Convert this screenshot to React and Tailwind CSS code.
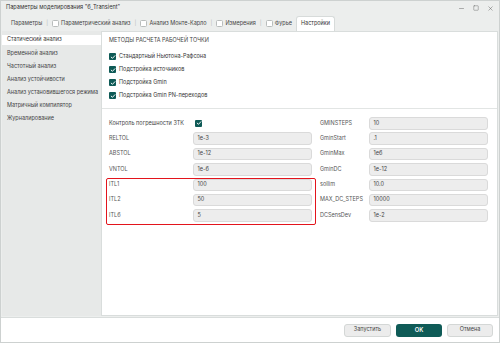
import { Minus, Square, X } from 'lucide-react'

const Check = ({ className = '' }) => (
  <div className={`w-[7px] h-[7px] rounded-[1px] bg-[#0e5a56] flex items-center justify-center shrink-0 ${className}`}>
    <svg viewBox="0 0 10 10" className="w-[6px] h-[6px]">
      <path d="M2 5.2 L4.1 7.2 L8.2 2.8" fill="none" stroke="white" strokeWidth="1.6" strokeLinecap="round" strokeLinejoin="round" />
    </svg>
  </div>
)

const EmptyBox = () => (
  <div className="w-[7px] h-[7px] rounded-[1.5px] border border-[#b9bdbc] bg-white shrink-0" />
)

const Field = ({ value }) => (
  <div className="w-[119px] h-[12.5px] rounded-[3px] bg-[#ededed] border border-[#dadada] flex items-center pl-[3.5px] text-[#444]">
    {value}
  </div>
)

const leftTop = [
  ['RELTOL', '1e-3'],
  ['ABSTOL', '1e-12'],
  ['VNTOL', '1e-6'],
]

const itlRows = [
  ['ITL1', '100'],
  ['ITL2', '50'],
  ['ITL6', '5'],
]

const rightRows = [
  ['GMINSTEPS', '10'],
  ['GminStart', '.1'],
  ['GminMax', '1e6'],
  ['GminDC', '1e-12'],
  ['sollim', '10.0'],
  ['MAX_DC_STEPS', '10000'],
  ['DCSensDev', '1e-2'],
]

const sideItems = [
  'Временной анализ',
  'Частотный анализ',
  'Анализ устойчивости',
  'Анализ установившегося режима',
  'Матричный компилятор',
  'Журналирование',
]

const methods = [
  'Стандартный Ньютона-Рафсона',
  'Подстройка источников',
  'Подстройка Gmin',
  'Подстройка Gmin PN-переходов',
]

const Sep = () => <span className="mx-[4px] text-[#b5b9b8]">|</span>

export default function App() {
  return (
    <div className="w-[500px] h-[343px] bg-[#eceeed] border border-[#cdd1d0] flex flex-col overflow-hidden font-['Inter',sans-serif] text-[5.5px] leading-none text-[#3a3a3a] whitespace-nowrap">
      {/* title bar */}
      <div className="h-[14px] flex items-center pl-[5px] pr-[5px] shrink-0">
        <span className="text-[5.6px] text-[#333]">Параметры моделирования "6_Transient"</span>
        <div className="ml-auto flex items-center gap-[8px] text-[#555]">
          <Minus size={7} strokeWidth={1.5} />
          <Square size={6} strokeWidth={1.6} />
          <X size={7} strokeWidth={1.5} />
        </div>
      </div>

      {/* tabs */}
      <div className="h-[16px] flex items-end pl-[10px] shrink-0 text-[#444]">
        <div className="h-[15px] flex items-center">
          <span>Параметры</span>
          <Sep />
          <EmptyBox />
          <span className="ml-[2px]">Параметрический анализ</span>
          <Sep />
          <EmptyBox />
          <span className="ml-[2px]">Анализ Монте-Карло</span>
          <Sep />
          <EmptyBox />
          <span className="ml-[2px]">Измерения</span>
          <Sep />
          <EmptyBox />
          <span className="ml-[2px]">Фурье</span>
        </div>
        <div className="ml-[4px] h-[15px] px-[4px] bg-white rounded-t-[3px] border border-b-0 border-[#d7dbda] flex items-center text-[#333]">
          Настройки
        </div>
      </div>

      {/* main */}
      <div className="flex-1 flex pl-[1px] pr-[1px] min-h-0">
        <div className="w-[99px] bg-[#e7e9e8] pt-[4px] shrink-0">
          <div className="h-[10px] bg-white flex items-center pl-[5px] text-[#333]">Статический анализ</div>
          <div className="mt-[2px]">
            {sideItems.map(t => (
              <div key={t} className="h-[13px] flex items-center pl-[5px] text-[#444]">{t}</div>
            ))}
          </div>
        </div>

        <div className="flex-1 bg-white border border-[#d9dddc]">
          <div className="pl-[7px] pt-[4px]">
            <div className="h-[10px] flex items-center text-[#444]">МЕТОДЫ РАСЧЕТА РАБОЧЕЙ ТОЧКИ</div>
            <div className="mt-[4px]">
              {methods.map(m => (
                <div key={m} className="h-[13px] flex items-center gap-[3px]">
                  <Check />
                  <span className="text-[#333]">{m}</span>
                </div>
              ))}
            </div>
          </div>
          <div className="mt-[6px] border-t border-[#e2e5e4]" />

          <div className="pl-[7px] pt-[8px] flex gap-[8px]">
            {/* left column */}
            <div className="flex flex-col gap-[2.9px]">
              <div className="h-[12.5px] flex items-center">
                <span className="w-[84px] text-[#444]">Контроль погрешности ЗТК</span>
                <Check className="ml-[2px]" />
              </div>
              {leftTop.map(([l, v]) => (
                <div key={l} className="h-[12.5px] flex items-center">
                  <span className="w-[84px] text-[#555]">{l}</span>
                  <Field value={v} />
                </div>
              ))}
              <div className="relative flex flex-col gap-[2.9px]">
                {itlRows.map(([l, v]) => (
                  <div key={l} className="h-[12.5px] flex items-center">
                    <span className="w-[84px] text-[#555]">{l}</span>
                    <Field value={v} />
                  </div>
                ))}
                <div className="absolute -top-[1px] -bottom-[3.5px] -left-[3.5px] -right-[4px] border-[1.5px] border-[#e3141c] rounded-[2px] pointer-events-none" />
              </div>
            </div>
            {/* right column */}
            <div className="flex flex-col gap-[2.9px]">
              {rightRows.map(([l, v]) => (
                <div key={l} className="h-[12.5px] flex items-center">
                  <span className="w-[49px] text-[#555]">{l}</span>
                  <Field value={v} />
                </div>
              ))}
            </div>
          </div>
        </div>
      </div>

      {/* footer */}
      <div className="h-[25px] mt-[1px] bg-white border-t border-[#d9dddc] flex items-center justify-end gap-[5px] pr-[6px] shrink-0">
        <button className="w-[47px] h-[13px] rounded-[3px] bg-[#ececec] border border-[#d4d7d6] text-[#444] text-[5.5px]">Запустить</button>
        <button className="w-[46px] h-[13px] rounded-[3px] bg-[#0f5b57] text-white font-semibold text-[5.8px]">OK</button>
        <button className="w-[46px] h-[13px] rounded-[3px] bg-[#ececec] border border-[#d4d7d6] text-[#444] text-[5.5px]">Отмена</button>
      </div>
    </div>
  )
}
